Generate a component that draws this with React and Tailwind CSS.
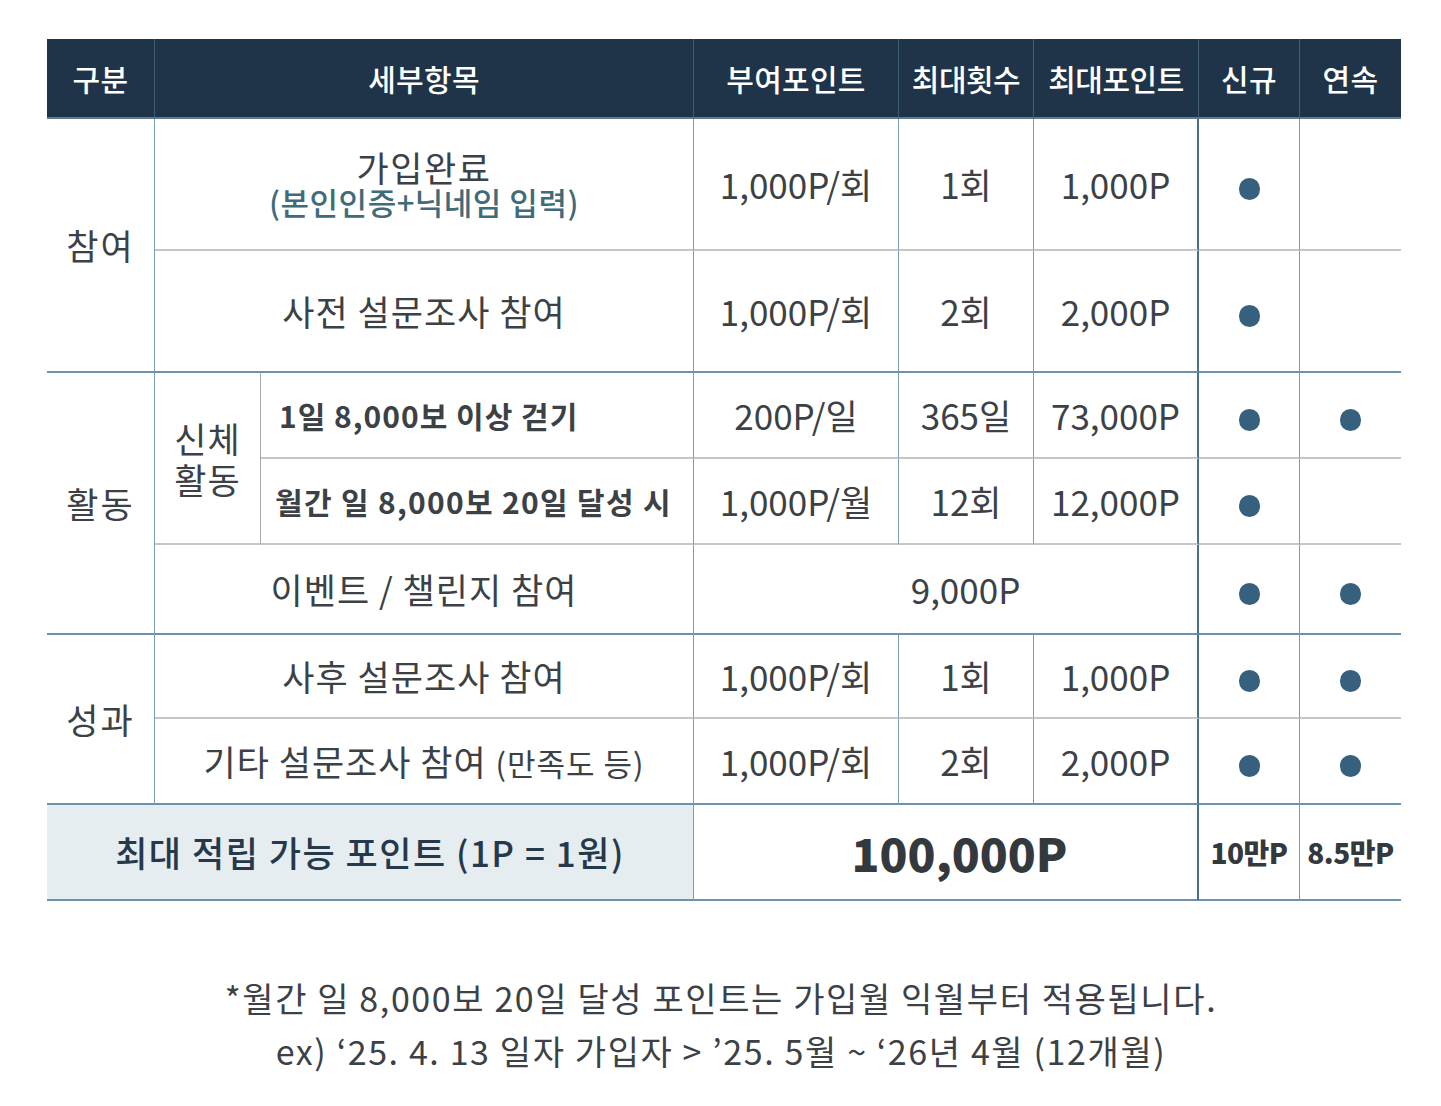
import React from "react";

const Dot = () => (
  <span className="inline-block w-[21px] h-[22px] rounded-full bg-[#37607e] align-middle" />
);

const B = "border-b-2 border-b-[#6d93ab]"; // section line
const G = "border-b-2 border-b-[#c6c6c6]"; // gray line
const R = "border-r border-r-[#7b9db3]";
const RD = "border-r-2 border-r-[#4a6f8b]";
const K = "tracking-[1px]"; // korean text
const N = "tracking-[0px]"; // numbers

export default function App() {
  return (
    <div className="w-[1441px] min-h-[1106px] bg-white font-['Noto_Sans_CJK_KR',sans-serif] text-[#3c4146]">
      <div className="pt-[39px] pl-[47px]">
        <table className="table-fixed border-separate border-spacing-0 w-[1354px]">
          <colgroup>
            <col className="w-[108px]" />
            <col className="w-[106px]" />
            <col className="w-[433px]" />
            <col className="w-[205px]" />
            <col className="w-[135px]" />
            <col className="w-[165px]" />
            <col className="w-[101px]" />
            <col className="w-[101px]" />
          </colgroup>
          <thead>
            <tr className="h-[80px] bg-[#1f3448] text-white text-[30px] font-medium tracking-[0.3px]">
              <th className="font-medium border-r border-r-[#3f5d74] border-b-2 border-b-[#5d7a90]">구분</th>
              <th colSpan={2} className="font-medium border-r border-r-[#3f5d74] border-b-2 border-b-[#5d7a90]">세부항목</th>
              <th className="font-medium border-r border-r-[#3f5d74] border-b-2 border-b-[#5d7a90]">부여포인트</th>
              <th className="font-medium border-r border-r-[#3f5d74] border-b-2 border-b-[#5d7a90] tracking-[-0.5px]">최대횟수</th>
              <th className="font-medium border-r border-r-[#3f5d74] border-b-2 border-b-[#5d7a90] tracking-[-0.5px]">최대포인트</th>
              <th className="font-medium border-r border-r-[#3f5d74] border-b-2 border-b-[#5d7a90]">신규</th>
              <th className="font-medium border-b-2 border-b-[#5d7a90]">연속</th>
            </tr>
          </thead>
          <tbody className="text-[35px] text-center">
            <tr className="h-[132px]">
              <td rowSpan={2} className={`${R} ${B} tracking-[2px]`}>참여</td>
              <td colSpan={2} className={`${R} ${G}`}>
                <div className="tracking-[1.5px] leading-[36px]">가입완료</div>
                <div className="text-[31px] leading-[34px] tracking-[0.5px] text-[#3f6b7a] font-medium">(본인인증+닉네임 입력)</div>
              </td>
              <td className={`${R} ${G} ${N}`}>1,000P/회</td>
              <td className={`${R} ${G} ${N}`}>1회</td>
              <td className={`${RD} ${G} ${N}`}>1,000P</td>
              <td className={`${R} ${G}`}><Dot /></td>
              <td className={G}></td>
            </tr>
            <tr className="h-[122px]">
              <td colSpan={2} className={`${R} ${B} ${K}`}>사전 설문조사 참여</td>
              <td className={`${R} ${B} ${N}`}>1,000P/회</td>
              <td className={`${R} ${B} ${N}`}>2회</td>
              <td className={`${RD} ${B} ${N}`}>2,000P</td>
              <td className={`${R} ${B}`}><Dot /></td>
              <td className={B}></td>
            </tr>
            <tr className="h-[86px]">
              <td rowSpan={3} className={`${R} ${B} tracking-[2px]`}>활동</td>
              <td rowSpan={2} className={`border-r border-r-[#a8a8a8] ${G} leading-[41px] ${K}`}>
                <div>신체</div>
                <div>활동</div>
              </td>
              <td className={`${R} ${G} text-left pl-[18px] text-[30px] font-bold tracking-[1px]`}>1일 8,000보 이상 걷기</td>
              <td className={`${R} ${G} ${N}`}>200P/일</td>
              <td className={`${R} ${G} ${N}`}>365일</td>
              <td className={`${RD} ${G} ${N}`}>73,000P</td>
              <td className={`${R} ${G}`}><Dot /></td>
              <td className={G}><Dot /></td>
            </tr>
            <tr className="h-[86px]">
              <td className={`${R} ${G} text-left pl-[14px] text-[30px] font-bold tracking-[1.3px]`}>월간 일 8,000보 20일 달성 시</td>
              <td className={`${R} ${G} ${N}`}>1,000P/월</td>
              <td className={`${R} ${G} ${N}`}>12회</td>
              <td className={`${RD} ${G} ${N}`}>12,000P</td>
              <td className={`${R} ${G}`}><Dot /></td>
              <td className={G}></td>
            </tr>
            <tr className="h-[90px]">
              <td colSpan={2} className={`${R} ${B} ${K}`}>이벤트 / 챌린지 참여</td>
              <td colSpan={3} className={`${RD} ${B} ${N} pl-[40px]`}>9,000P</td>
              <td className={`${R} ${B}`}><Dot /></td>
              <td className={B}><Dot /></td>
            </tr>
            <tr className="h-[84px]">
              <td rowSpan={2} className={`${R} ${B} tracking-[2px]`}>성과</td>
              <td colSpan={2} className={`${R} ${G} ${K}`}>사후 설문조사 참여</td>
              <td className={`${R} ${G} ${N}`}>1,000P/회</td>
              <td className={`${R} ${G} ${N}`}>1회</td>
              <td className={`${RD} ${G} ${N}`}>1,000P</td>
              <td className={`${R} ${G}`}><Dot /></td>
              <td className={G}><Dot /></td>
            </tr>
            <tr className="h-[86px]">
              <td colSpan={2} className={`${R} ${B} ${K}`}>
                기타 설문조사 참여 <span className="text-[31px]">(만족도 등)</span>
              </td>
              <td className={`${R} ${B} ${N}`}>1,000P/회</td>
              <td className={`${R} ${B} ${N}`}>2회</td>
              <td className={`${RD} ${B} ${N}`}>2,000P</td>
              <td className={`${R} ${B}`}><Dot /></td>
              <td className={B}><Dot /></td>
            </tr>
            <tr className="h-[96px]">
              <td colSpan={3} className={`${R} ${B} bg-[#e5edf1] text-[#26394a] font-medium tracking-[1.5px]`}>
                최대 적립 가능 포인트 (1P = 1원)
              </td>
              <td colSpan={3} className={`${RD} ${B} pl-[28px] text-[46px] font-extrabold tracking-[0px] text-[#34393e]`}>100,000P</td>
              <td className={`${R} ${B} text-[28px] font-extrabold tracking-[-0.5px] text-[#34393e]`}>10만P</td>
              <td className={`${B} text-[28px] font-extrabold tracking-[-0.5px] text-[#34393e]`}>8.5만P</td>
            </tr>
          </tbody>
        </table>
      </div>
      <div className="mt-[70px] text-center text-[34px] leading-[53px] tracking-[1.6px] pl-[1px]">
        <p>*월간 일 8,000보 20일 달성 포인트는 가입월 익월부터 적용됩니다.</p>
        <p>ex) ‘25. 4. 13 일자 가입자 &gt; ’25. 5월 ~ ‘26년 4월 (12개월)</p>
      </div>
    </div>
  );
}
